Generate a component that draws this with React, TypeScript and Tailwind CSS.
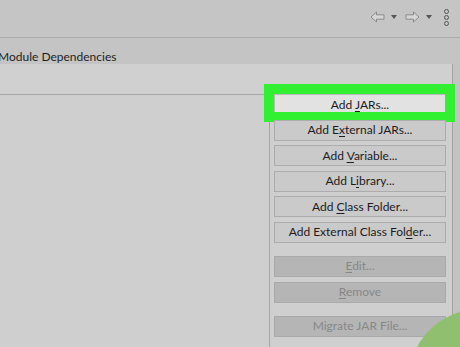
const font = { fontFamily: 'Lato, "Liberation Sans", sans-serif' }

type Btn = { pre: string; key: string; post: string; disabled?: boolean; focus?: boolean }

const group1: Btn[] = [
  { pre: "Add ", key: "J", post: "ARs...", focus: true },
  { pre: "Add E", key: "x", post: "ternal JARs..." },
  { pre: "Add ", key: "V", post: "ariable..." },
  { pre: "Add L", key: "i", post: "brary..." },
  { pre: "Add ", key: "C", post: "lass Folder..." },
  { pre: "Add External Class Fol", key: "d", post: "er..." },
]

const group2: Btn[] = [
  { pre: "", key: "E", post: "dit...", disabled: true },
  { pre: "", key: "R", post: "emove", disabled: true },
]

const SideButton = ({ b }: { b: Btn }) => {
  const base = "relative flex h-[21px] w-[172px] shrink-0 items-center justify-center border text-[12px] leading-none"
  const look = b.disabled
    ? "bg-[#b5b5b5] border-[#a9a9a9] text-[#878787]"
    : b.focus
      ? "bg-[#e2e2e2] border-[#b9b9b9] text-[#1c1c1c]"
      : "bg-[#cacaca] border-[#acacac] text-[#1c1c1c]"
  return (
    <div className={`${base} ${look}`}>
      <span>
        {b.pre}
        <span className="underline underline-offset-2">{b.key}</span>
        {b.post}
      </span>
      {b.focus && (
        <div className="absolute -top-[11px] -left-[11px] -right-[10px] -bottom-[8px] border-[10px] border-[#31f031]" />
      )}
    </div>
  )
}

const Arrow = ({ flip }: { flip?: boolean }) => (
  <svg width="15" height="12" viewBox="0 0 15 12" className={flip ? "-scale-x-100" : ""}>
    <path d="M1 6 L6.5 1 V3.8 H14 V8.2 H6.5 V11 Z" fill="#d6d6d6" stroke="#8a8a8a" strokeWidth="1" strokeLinejoin="round" />
  </svg>
)

const Caret = () => (
  <svg width="6" height="4" viewBox="0 0 6 4">
    <path d="M0 0 H6 L3 4 Z" fill="#555" />
  </svg>
)

const App = () => {
  return (
    <div className="relative h-[347px] w-[460px] overflow-hidden bg-[#cfcfcf]" style={font}>
      {/* toolbar */}
      <div className="flex h-[38px] items-center justify-end border-b border-[#a9a9a9] bg-[#c5c5c5] pr-[11px] pb-[3px]">
        <Arrow />
        <div className="ml-[6px]"><Caret /></div>
        <div className="ml-[8px]"><Arrow flip /></div>
        <div className="ml-[6px]"><Caret /></div>
        <div className="ml-[12px] flex flex-col items-center gap-[1px]">
          <span className="h-[5px] w-[5px] rounded-full border border-[#555]" />
          <span className="h-[5px] w-[5px] rounded-full border border-[#555]" />
          <span className="h-[5px] w-[5px] rounded-full border border-[#555]" />
        </div>
      </div>

      {/* page title */}
      <div className="h-[26px] bg-[#c4c4c4] pt-[13px]">
        <div className="-ml-[2px] text-[12px] leading-none text-[#1e1e1e]">Module Dependencies</div>
      </div>

      <div className="flex h-full">
        <div className="flex w-[453px] flex-col border-r border-[#a3a3a3] bg-[#cfcfcf]">
          <div className="h-[30px] bg-[#d0d0d0]" />
          <div className="flex flex-1">
            <div className="w-[270px] border-t border-r border-[#a6a6a6] bg-[#cfcfcf]" />
            <div className="flex flex-col pl-[4px]">
              <div className="flex flex-col gap-[4.6px]">
                {group1.map((b) => (
                  <SideButton key={b.pre + b.post} b={b} />
                ))}
              </div>
              <div className="mt-[13px] flex flex-col gap-[5px]">
                {group2.map((b) => (
                  <SideButton key={b.post} b={b} />
                ))}
              </div>
              <div className="mt-[13px] flex h-[21px] w-[172px] items-center justify-center border border-[#a9a9a9] bg-[#b5b5b5] text-[12px] leading-none text-[#878787]">
                Migrate JAR File...
              </div>
            </div>
          </div>
        </div>
        <div className="flex-1 bg-[#c3c3c3]" />
      </div>

      {/* green corner mark */}
      <div className="absolute left-[409px] top-[309px] h-[142px] w-[142px] rounded-full bg-[#8fbf6f]" />
    </div>
  )
}

export default App
